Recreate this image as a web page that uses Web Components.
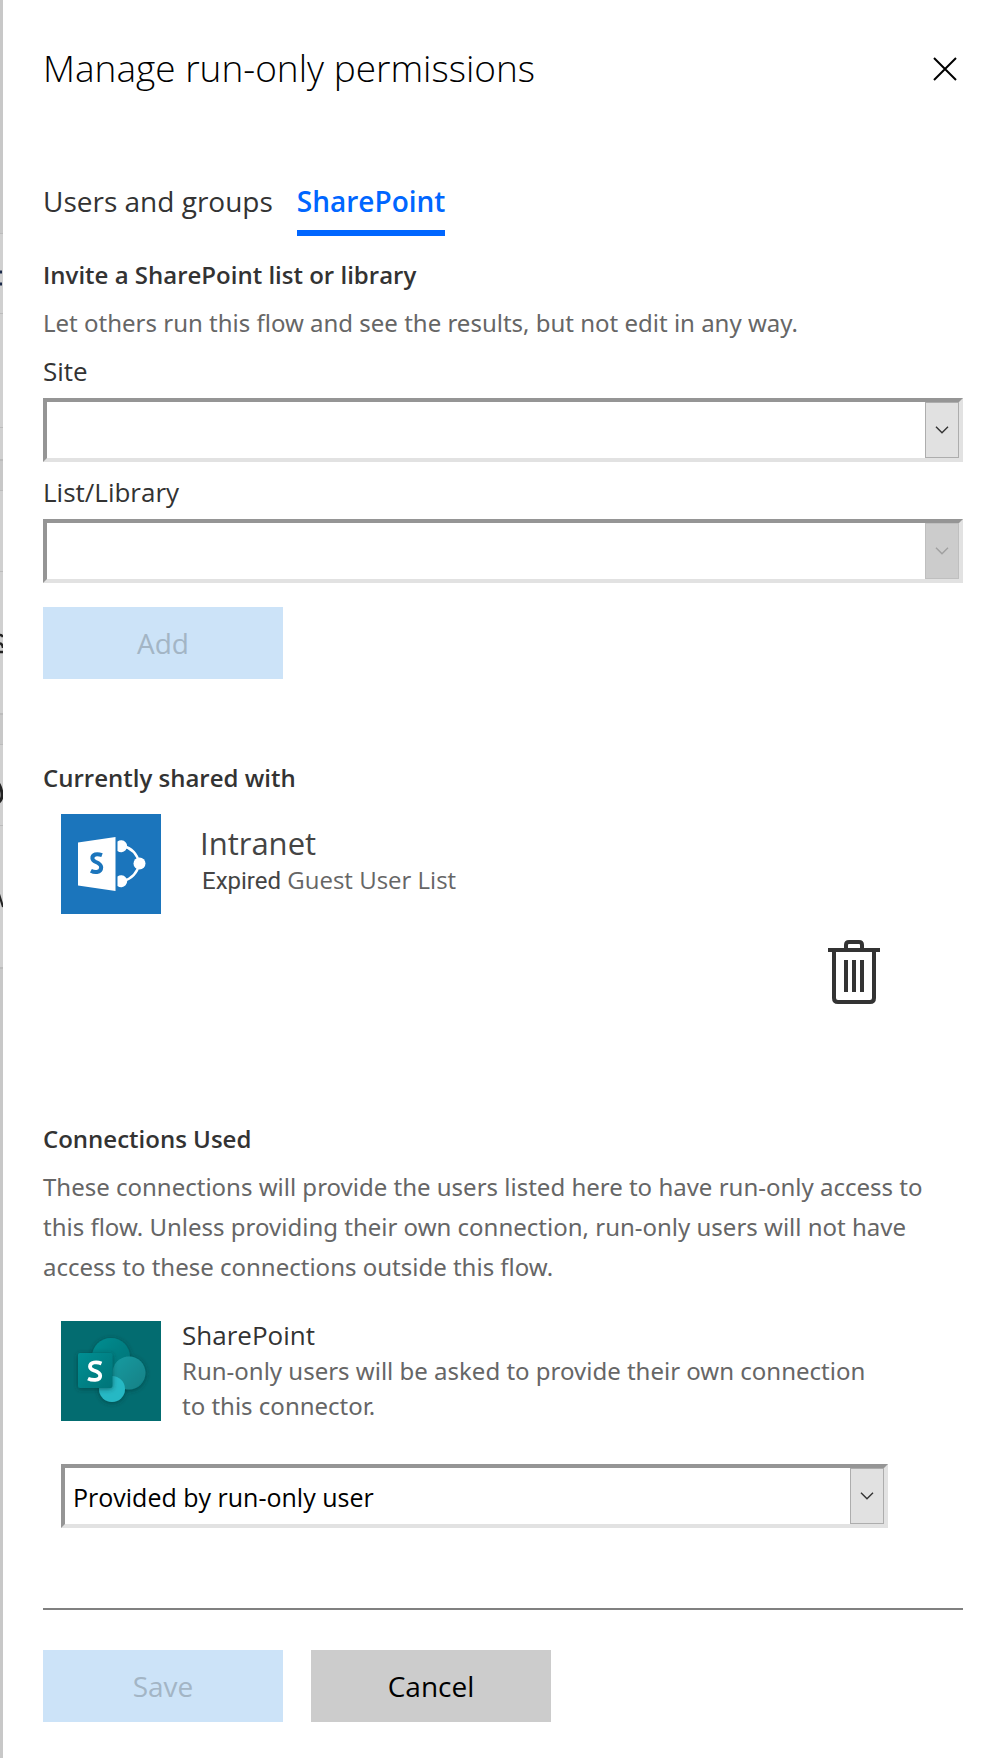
<!DOCTYPE html>
<html lang="en">
<head>
<meta charset="utf-8">
<title>Manage run-only permissions</title>
<style>
  html, body { margin: 0; background: #fff; }
  body {
    font-family: "Open Sans", "Noto Sans", sans-serif;
    --copy-font: "Noto Sans", "Open Sans", sans-serif;
    color: #333;
    min-height: 100vh;
    display: flex;
  }
</style>
</head>
<body>
<permissions-app></permissions-app>

<script>
const define = (name, html, setup) => {
  const template = document.createElement('template');
  template.innerHTML = html;
  customElements.define(name, class extends HTMLElement {
    connectedCallback() {
      if (this.shadowRoot) return;
      this.attachShadow({ mode: 'open' }).append(template.content.cloneNode(true));
      if (setup) setup(this, this.shadowRoot);
    }
  });
};

/* Dimmed edge of the flow page that stays visible beside the panel */
define('page-edge', `
  <style>
    :host { display: block; width: 3px; flex: none; background: #c8c8c8; overflow: hidden; }
    svg { display: block; }
  </style>
  <svg width="3" height="1000" viewBox="0 0 3 1000" aria-hidden="true">
    <g fill="#d0d0d0">
      <path d="M0 234h3v225H0zM0 491h3v222H0zM0 745h3v222H0z"/>
    </g>
    <g fill="#bcbcbc">
      <path d="M0 233h3v1H0zM0 313h3v1H0zM0 427h3v1H0zM0 459h3v2H0zM0 490h3v1H0zM0 571h3v1H0zM0 713h3v2H0zM0 744h3v1H0zM0 825h3v1H0zM0 967h3v2H0z"/>
    </g>
    <g fill="none" stroke="#222" stroke-width="2">
      <path d="M0 272h2M0 284h2" stroke="#1b2a4a" stroke-width="3"/>
      <path d="M0 635q2 0 3 2M0 643q3 2 3 5M0 652h3" stroke-width="2.500"/>
      <path d="M-1 784q3 6 3 11 0 5-3 7" stroke-width="3"/>
      <path d="M-1 894l4 13"/>
    </g>
  </svg>`);

define('panel-header', `
  <style>
    :host { display: flex; justify-content: space-between; align-items: center; }
    h1 { margin: 0; font-size: 37px; line-height: 48px; font-weight: 300; color: #000; }
    button { border: 0; padding: 2px 0 0; background: none; width: 36px; height: 36px; display: grid; place-items: center; }
    svg { display: block; }
  </style>
  <h1><slot></slot></h1>
  <button type="button" aria-label="Close">
    <svg width="24" height="24" viewBox="0 0 24 24" fill="none" stroke="#000" stroke-width="2"><path d="M1 1l22 22M23 1L1 23"/></svg>
  </button>`);

define('panel-tabs', `
  <style>
    :host { display: block; }
    nav { display: flex; gap: 24px; font-size: 28px; line-height: 36px; }
    a { color: #333; text-decoration: none; padding-bottom: 11px; border-bottom: 6px solid transparent; }
    a[aria-current] { color: #0066ff; font-weight: 600; border-color: #0066ff; }
  </style>
  <nav><a href="#users">Users and groups</a><a href="#sharepoint" aria-current="page">SharePoint</a></nav>`);

define('section-title', `
  <style>
    :host { display: block; }
    h2 { margin: 0; font-size: 24px; line-height: 36px; font-weight: 600; color: #333; }
  </style>
  <h2><slot></slot></h2>`);

define('body-text', `
  <style>
    :host { display: block; font-family: var(--copy-font); }
    p { margin: 0; font-size: 24px; line-height: 40px; color: #666; }
  </style>
  <p><slot></slot></p>`);

define('select-field', `
  <style>
    :host { display: block; }
    label { display: block; font-size: 26px; line-height: 36px; padding-bottom: 9px; color: #333; }
    label[hidden] { display: none; }
    .box { display: grid; grid-template-columns: 1fr 34px; height: 56px; border: 4px solid; border-color: #959595 #e2e2e2 #e2e2e2 #959595; background: #fff; }
    select { grid-area: 1 / 1 / 2 / 3; width: 100%; height: 100%; appearance: none; border: 0; border-radius: 0; background: none; padding: 2px 44px 0 8px; font: inherit; font-size: 25px; color: #000; opacity: 1; outline-offset: -2px; }
    .arrow { grid-area: 1 / 2; display: grid; place-items: center; box-sizing: border-box; background: #e1e1e1; border: 1px solid #adadad; color: #333; pointer-events: none; }
    :host([disabled]) .arrow { background: #ccc; border-color: #bfbfbf; color: #a0a0a0; }
    svg { display: block; }
  </style>
  <label for="control"></label>
  <div class="box">
    <select id="control"></select>
    <span class="arrow"><svg width="14" height="8" viewBox="0 0 14 8" fill="none" stroke="currentColor" stroke-width="1.4" aria-hidden="true"><path d="M1 .8l6 6 6-6"/></svg></span>
  </div>`, (host, root) => {
    const label = root.querySelector('label');
    const select = root.querySelector('select');
    if (host.hasAttribute('label')) {
      label.textContent = host.getAttribute('label');
    } else {
      label.hidden = true;
      select.setAttribute('aria-label', host.getAttribute('name'));
    }
    select.add(new Option(host.getAttribute('value') || ''));
    select.disabled = host.hasAttribute('disabled');
  });

define('action-button', `
  <style>
    :host { display: block; width: 240px; }
    button { width: 100%; height: 72px; border: 0; border-radius: 0; background: #ccc; color: #000; font: inherit; font-size: 28px; line-height: 36px; padding: 0; display: block; }
    button:disabled { background: #cce3f8; color: #a3b5c5; }
  </style>
  <button type="button"><slot></slot></button>`, (host, root) => {
    root.querySelector('button').disabled = host.hasAttribute('disabled');
  });

define('shared-item', `
  <style>
    :host { display: block; padding: 0 82px 0 18px; }
    .row { display: flex; gap: 39px; }
    svg { display: block; flex: none; }
    .name { font-size: 31px; line-height: 36px; padding: 11px 0 1px; color: #444; }
    .list { font-size: 24px; line-height: 36px; color: #666; padding-left: 2px; }
    .list b { font-weight: 400; font-family: Roboto, "Open Sans", sans-serif; color: #444; }
    button { display: block; margin: 25px 0 0 auto; border: 0; padding: 0; background: none; }
  </style>
  <div class="row">
    <svg width="100" height="100" viewBox="0 0 100 100" role="img" aria-label="SharePoint site">
      <path fill="#1b75bc" d="M0 0h100v100H0z"/>
      <path fill="#fff" d="M17 28.500l37.500-5.500v54L17 71.500z"/>
      <g fill="none" stroke="#fff" stroke-width="2.400"><path d="M62 32q13 3 16.500 17.500Q75 64 62 67"/></g>
      <path fill="#fff" d="M56.500 27.500a6 6 0 1 1 0 9.500zM56.500 62.500a6 6 0 1 1 0 9.500z"/>
      <circle cx="78.500" cy="49.500" r="6" fill="#fff"/>
      <path d="M41 41.200q-4-1.500-6.800-.7-3 1-2.800 3.800.2 2.200 3.500 3.700 5 2 5.300 5.200 0 4-4.300 4.800-3 .4-6-1.200" fill="none" stroke="#1b75bc" stroke-width="4"/>
    </svg>
    <div>
      <div class="name">Intranet</div>
      <div class="list"><b>Expired</b> Guest User List</div>
    </div>
  </div>
  <button type="button" aria-label="Remove">
    <svg width="54" height="66" viewBox="0 0 54 66" fill="none" stroke="#333" stroke-width="4" aria-hidden="true">
      <path d="M1 11h52M19 11V6q0-3 3-3h10q3 0 3 3v5M7 11v48q0 4 4 4h32q4 0 4-4V11M19 21v32M27 21v32M35 21v32"/>
    </svg>
  </button>`);

define('connection-item', `
  <style>
    :host { display: block; padding: 0 75px 0 18px; }
    .row { display: flex; gap: 21px; margin-bottom: 41px; }
    svg { display: block; flex: none; }
    .name { font-size: 26px; line-height: 28px; padding-bottom: 4px; color: #333; }
    .note { font-family: var(--copy-font); font-size: 24px; line-height: 35px; color: #666; }
  </style>
  <div class="row">
    <svg width="100" height="100" viewBox="0 0 100 100" role="img" aria-label="SharePoint">
      <defs>
        <linearGradient id="a" x1="0" y1="0" x2="1" y2="1"><stop offset="0" stop-color="#058f92"/><stop offset="1" stop-color="#038387" stop-opacity=".3"/></linearGradient>
        <linearGradient id="b" x1="0" y1="0" x2="1" y2="1"><stop offset="0" stop-color="#1a9ba1"/><stop offset="1" stop-color="#108085"/></linearGradient>
        <linearGradient id="c" x1="0" y1="0" x2="1" y2="1"><stop offset="0" stop-color="#048f93"/><stop offset="1" stop-color="#037478"/></linearGradient>
        <filter id="s" x="-40%" y="-40%" width="180%" height="180%"><feDropShadow dx="0" dy="1" stdDeviation="2.500" flood-color="#003436" flood-opacity=".6"/></filter>
      </defs>
      <path fill="#036c70" d="M0 0h100v100H0z"/>
      <g filter="url(#s)">
        <circle cx="50" cy="36" r="19" fill="#036c70"/><circle cx="50" cy="36" r="19" fill="url(#a)"/>
        <circle cx="68" cy="52" r="16.500" fill="url(#b)"/>
        <circle cx="51" cy="68" r="13" fill="#28b8c4"/>
      </g>
      <rect x="17" y="32" width="34.500" height="35" rx="2" fill="url(#c)" filter="url(#s)"/>
      <path d="M40.500 42.500q-4-1.700-7.500-1-4 .9-4 4 0 2.500 4 4 6.200 2 6.200 5.200 0 3.700-5 4.200-4 .2-7.200-1.300" fill="none" stroke="#fff" stroke-width="3.800"/>
    </svg>
    <div>
      <div class="name">SharePoint</div>
      <div class="note">Run-only users will be asked to provide their own connection to this connector.</div>
    </div>
  </div>
  <select-field name="Connection for SharePoint" value="Provided by run-only user"></select-field>`);

define('permissions-app', `
  <style>
    :host { display: flex; flex: 1; min-width: 0; }
    main { flex: 1; min-width: 0; padding: 44px 40px 36px; }
    panel-tabs { margin: 91px 0 21px; }
    .intro { margin: 10px 0; }
    .field { margin-bottom: 12px; }
    .add { margin: 24px 0 81px; }
    shared-item { margin: 18px 0 116px; }
    .connections { margin: 10px 0 34px; }
    hr { border: 0; height: 2px; margin: 80px 0 40px; background: #808080; }
    footer { display: flex; gap: 28px; }
  </style>
  <page-edge></page-edge>
  <main>
    <panel-header>Manage run-only permissions</panel-header>
    <panel-tabs></panel-tabs>
    <section-title>Invite a SharePoint list or library</section-title>
    <body-text class="intro">Let others run this flow and see the results, but not edit in any way.</body-text>
    <select-field class="field" label="Site"></select-field>
    <select-field label="List/Library" disabled></select-field>
    <action-button class="add" disabled>Add</action-button>
    <section-title>Currently shared with</section-title>
    <shared-item></shared-item>
    <section-title>Connections Used</section-title>
    <body-text class="connections">These connections will provide the users listed here to have run-only access to this flow. Unless providing their own connection, run-only users will not have access to these connections outside this flow.</body-text>
    <connection-item></connection-item>
    <hr>
    <footer><action-button disabled>Save</action-button><action-button>Cancel</action-button></footer>
  </main>`);
</script>
</body>
</html>
